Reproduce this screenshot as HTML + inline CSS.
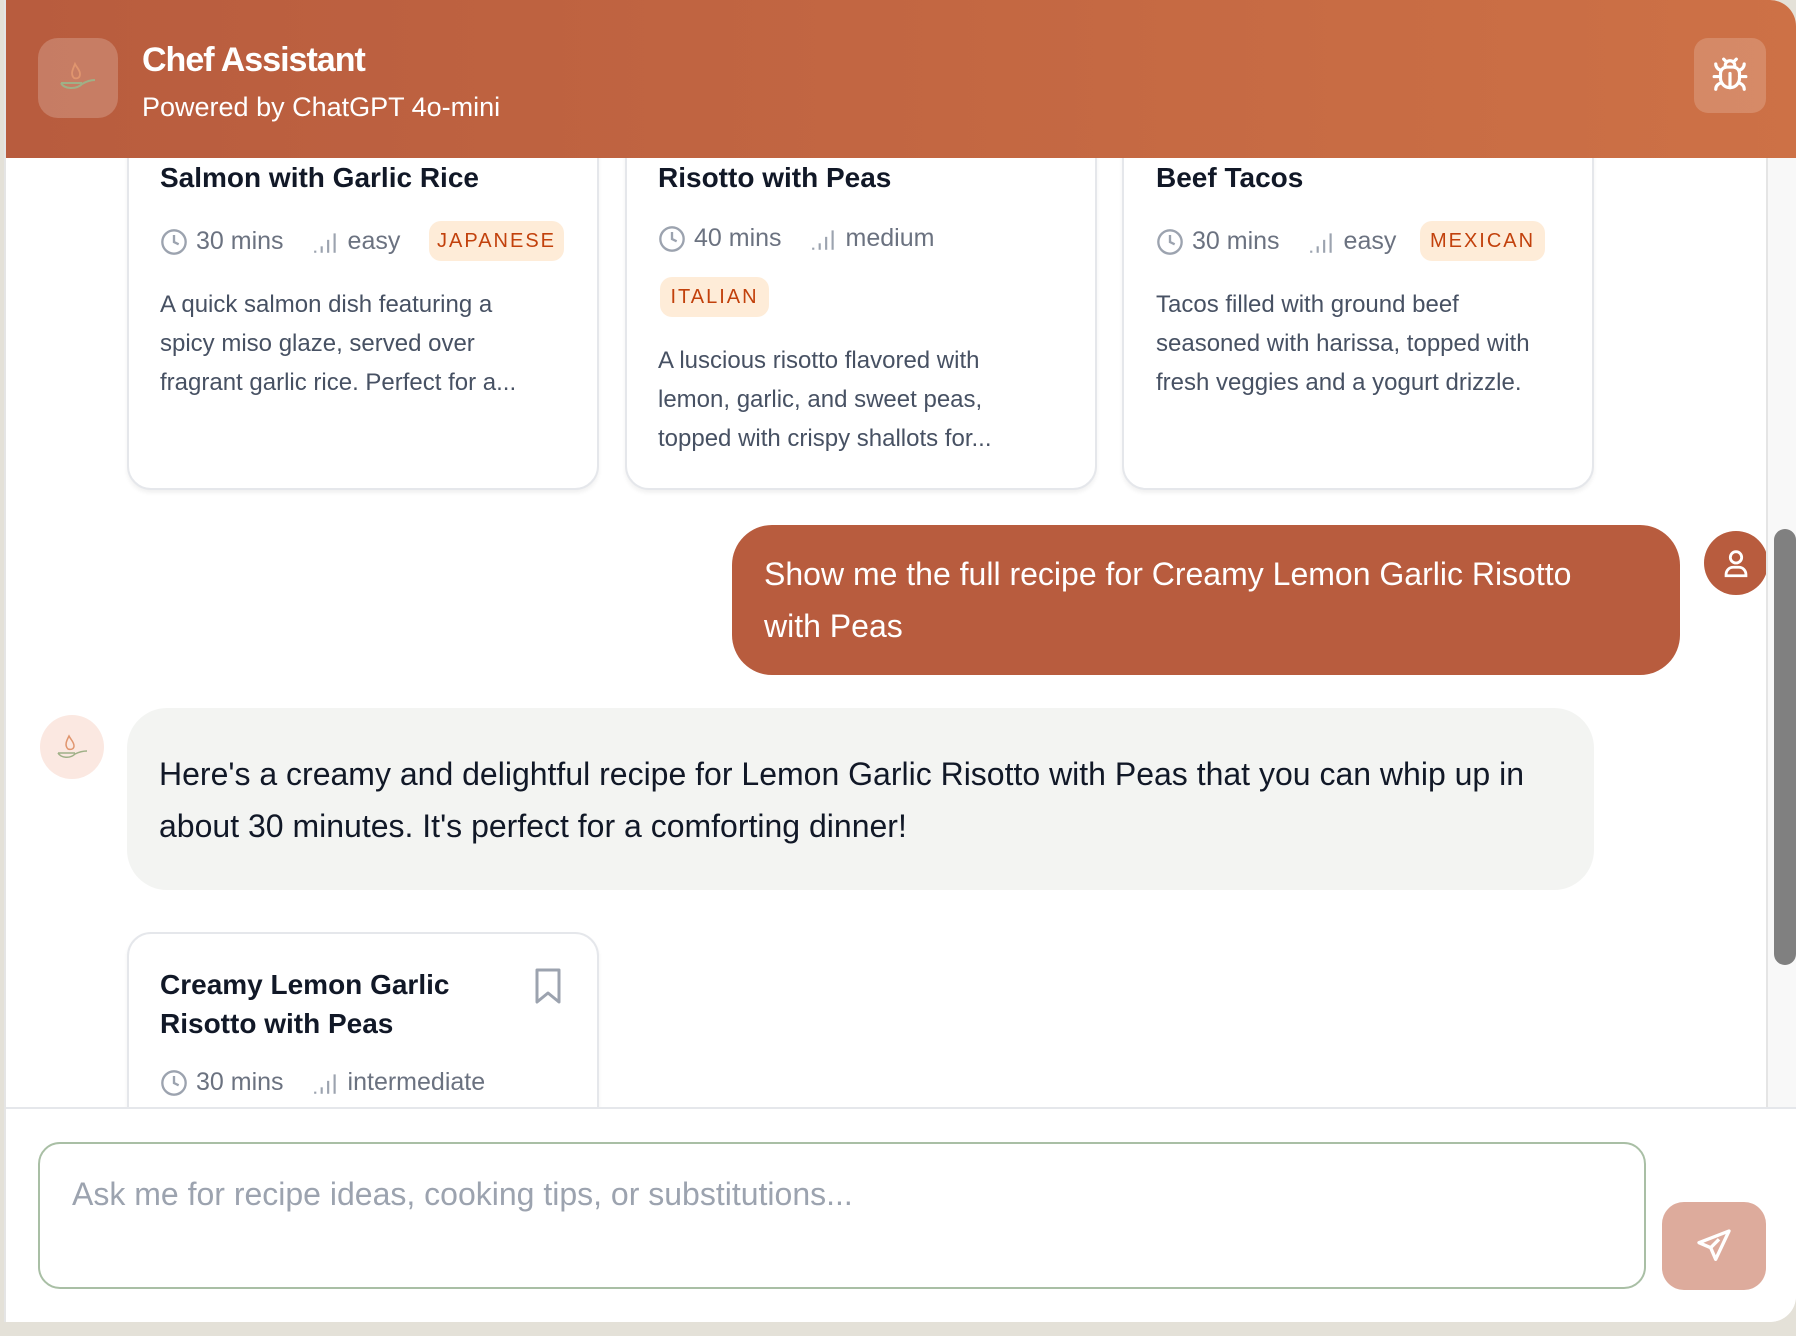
<!DOCTYPE html>
<html><head><meta charset="utf-8"><style>
*{margin:0;padding:0;box-sizing:border-box}
html,body{width:1796px;height:1336px;overflow:hidden;background:#e4e1d8;font-family:"Liberation Sans",sans-serif}
.win{position:absolute;left:4px;top:0;width:1792px;height:1322px;background:#fff;border-bottom-right-radius:26px;border-top-right-radius:26px;overflow:hidden;border-left:2px solid #e5e5e5}
.a{position:absolute}
.hdr{left:0;top:0;width:1792px;height:158px;background:linear-gradient(90deg,#b85c3e,#cd7146);z-index:5}
.card{background:#fff;border:2px solid #e5e7eb;border-radius:24px;box-shadow:0 3px 4px rgba(0,0,0,.06)}
.t{color:#111827;font-weight:bold;font-size:28px;white-space:nowrap}
.meta{color:#6b7280;font-size:25px;white-space:nowrap;display:flex;align-items:center}
.meta svg{margin-right:8px}
.badge{background:#feecd8;color:#c2410c;font-size:20px;letter-spacing:2px;border-radius:12px;display:flex;align-items:center;justify-content:center}
.d{color:#475163;font-size:24px;line-height:39px}
</style></head><body>
<div class="win">
<div class="a hdr">
 <div class="a" style="left:32px;top:38px;width:80px;height:80px;border-radius:20px;background:rgba(255,255,255,.2)">
  <svg width="80" height="80" viewBox="0 0 80 80"><path d="M36 40c-4-4-1-9 1-14 2 4 5 6 5 10 0 4-3 5-6 4z" fill="none" stroke="#e0956e" stroke-width="1.8"/><path d="M23 45c3 6 15 7 21 1 5-3 10-4 13-4M23 45h21" fill="none" stroke="#9fb087" stroke-width="2"/></svg>
 </div>
 <div class="a" style="left:136px;top:41px;color:#fff;font-size:34px;font-weight:bold;letter-spacing:-1px">Chef Assistant</div>
 <div class="a" style="left:136px;top:92px;color:#fff;font-size:27px">Powered by ChatGPT 4o-mini</div>
 <div class="a" style="left:1688px;top:38px;width:72px;height:75px;border-radius:14px;background:rgba(255,255,255,.18)">
  <svg class="a" style="left:17px;top:18px" width="38" height="38" viewBox="0 0 24 24" fill="none" stroke="#fff" stroke-width="2" stroke-linecap="round"><path d="M8 2l1.9 1.9M16 2l-1.9 1.9M9 7.1V6a3 3 0 0 1 6 0v1.1"/><path d="M12 20c-3.3 0-6-2.7-6-6v-3a4 4 0 0 1 4-4h4a4 4 0 0 1 4 4v3c0 3.3-2.7 6-6 6z"/><path d="M12 20v-9M6.5 9C4.6 8.8 3 7.1 3 5M6 13H2M3 21c0-2.1 1.7-3.9 3.8-4M20.97 5c0 2.1-1.6 3.8-3.5 4M22 13h-4M17.2 17c2.1.1 3.8 1.9 3.8 4"/></svg>
 </div>
</div>

<div class="a card" style="left:121px;top:120px;width:472px;height:370px"></div>
<div class="a card" style="left:619px;top:120px;width:472px;height:370px"></div>
<div class="a card" style="left:1116px;top:120px;width:472px;height:370px"></div>

<div class="a t" style="left:154px;top:162px">Salmon with Garlic Rice</div>
<div class="a meta" style="left:154px;top:227px"><svg width="28" height="28" viewBox="0 0 24 24" fill="none" stroke="#9ca3af" stroke-width="2"><circle cx="12" cy="12" r="10"/><path d="M12 6v6l4 2"/></svg>30 mins<span style="width:28px"></span><svg width="28" height="26" viewBox="0 0 26 24" fill="#9ca3af"><rect x="2" y="20" width="2" height="2"/><rect x="8" y="16" width="2" height="6"/><rect x="14" y="10" width="2" height="12"/><rect x="20" y="4" width="2" height="18"/></svg>easy</div>
<div class="a badge" style="left:423px;top:221px;width:135px;height:40px">JAPANESE</div>
<div class="a d" style="left:154px;top:285px;width:420px">A quick salmon dish featuring a<br>spicy miso glaze, served over<br>fragrant garlic rice. Perfect for a...</div>

<div class="a t" style="left:652px;top:162px">Risotto with Peas</div>
<div class="a meta" style="left:652px;top:224px"><svg width="28" height="28" viewBox="0 0 24 24" fill="none" stroke="#9ca3af" stroke-width="2"><circle cx="12" cy="12" r="10"/><path d="M12 6v6l4 2"/></svg>40 mins<span style="width:28px"></span><svg width="28" height="26" viewBox="0 0 26 24" fill="#9ca3af"><rect x="2" y="20" width="2" height="2"/><rect x="8" y="16" width="2" height="6"/><rect x="14" y="10" width="2" height="12"/><rect x="20" y="4" width="2" height="18"/></svg>medium</div>
<div class="a badge" style="left:654px;top:277px;width:109px;height:40px">ITALIAN</div>
<div class="a d" style="left:652px;top:341px;width:420px">A luscious risotto flavored with<br>lemon, garlic, and sweet peas,<br>topped with crispy shallots for...</div>

<div class="a t" style="left:1150px;top:162px">Beef Tacos</div>
<div class="a meta" style="left:1150px;top:227px"><svg width="28" height="28" viewBox="0 0 24 24" fill="none" stroke="#9ca3af" stroke-width="2"><circle cx="12" cy="12" r="10"/><path d="M12 6v6l4 2"/></svg>30 mins<span style="width:28px"></span><svg width="28" height="26" viewBox="0 0 26 24" fill="#9ca3af"><rect x="2" y="20" width="2" height="2"/><rect x="8" y="16" width="2" height="6"/><rect x="14" y="10" width="2" height="12"/><rect x="20" y="4" width="2" height="18"/></svg>easy</div>
<div class="a badge" style="left:1414px;top:221px;width:125px;height:40px">MEXICAN</div>
<div class="a d" style="left:1150px;top:285px;width:420px">Tacos filled with ground beef<br>seasoned with harissa, topped with<br>fresh veggies and a yogurt drizzle.</div>

<div class="a" style="left:726px;top:525px;width:948px;height:150px;background:#b85c3e;border-radius:40px;color:#fff;font-size:32px;line-height:52px;padding:23px 32px">Show me the full recipe for Creamy Lemon Garlic Risotto<br>with Peas</div>
<div class="a" style="left:1698px;top:531px;width:64px;height:64px;border-radius:50%;background:#b85c3e">
 <svg class="a" style="left:15px;top:15px" width="34" height="34" viewBox="0 0 24 24" fill="none" stroke="#fff" stroke-width="2" stroke-linecap="round"><circle cx="12" cy="8" r="4"/><path d="M5 21v-1a5 5 0 0 1 5-5h4a5 5 0 0 1 5 5v1z"/></svg>
</div>

<div class="a" style="left:34px;top:715px;width:64px;height:64px;border-radius:50%;background:#fbe8e1">
 <svg width="64" height="64" viewBox="0 0 64 64"><path d="M28 34c-4-4-1-9 1-13 2 4 5 6 5 10 0 3-3 4-6 3z" fill="none" stroke="#e0956e" stroke-width="1.5"/><path d="M18 38c3 5 12 6 17 1 4-2 9-3 12-3M18 38h17" fill="none" stroke="#9fb087" stroke-width="1.5"/></svg>
</div>
<div class="a" style="left:121px;top:708px;width:1467px;height:182px;background:#f3f4f2;border-radius:40px;color:#111827;font-size:32px;line-height:52px;padding:40px 32px">Here's a creamy and delightful recipe for Lemon Garlic Risotto with Peas that you can whip up in<br>about 30 minutes. It's perfect for a comforting dinner!</div>

<div class="a card" style="left:121px;top:932px;width:472px;height:260px"></div>
<div class="a t" style="left:154px;top:965px;line-height:39px">Creamy Lemon Garlic<br>Risotto with Peas</div>
<svg class="a" style="left:526px;top:967px" width="32" height="38" viewBox="0 0 32 38" fill="none" stroke="#9ca3af" stroke-width="3" stroke-linejoin="round"><path d="M5 3h22v32l-11-9-11 9z"/></svg>
<div class="a meta" style="left:154px;top:1068px"><svg width="28" height="28" viewBox="0 0 24 24" fill="none" stroke="#9ca3af" stroke-width="2"><circle cx="12" cy="12" r="10"/><path d="M12 6v6l4 2"/></svg>30 mins<span style="width:28px"></span><svg width="28" height="26" viewBox="0 0 26 24" fill="#9ca3af"><rect x="2" y="20" width="2" height="2"/><rect x="8" y="16" width="2" height="6"/><rect x="14" y="10" width="2" height="12"/><rect x="20" y="4" width="2" height="18"/></svg>intermediate</div>

<div class="a" style="left:1760px;top:158px;width:32px;height:950px;background:#f8f8f8;border-left:2px solid #e5e5e5"></div>
<div class="a" style="left:1768px;top:529px;width:22px;height:436px;background:#808080;border-radius:11px"></div>

<div class="a" style="left:0;top:1107px;width:1792px;height:215px;background:#fff;border-top:2px solid #e5e7eb"></div>
<div class="a" style="left:32px;top:1142px;width:1608px;height:147px;border:2px solid #a9bfa5;border-radius:22px;color:#9ca3af;font-size:32px;padding:32px 32px">Ask me for recipe ideas, cooking tips, or substitutions...</div>
<div class="a" style="left:1656px;top:1202px;width:104px;height:88px;border-radius:22px;background:#ddab9c">
 <svg class="a" style="left:32px;top:24px" width="40" height="40" viewBox="0 0 24 24" fill="none" stroke="#fff" stroke-width="2" stroke-linejoin="round"><path d="M21 3L3 10l7 3 3 7z"/><path d="M10 13l5-5"/></svg>
</div>
</div>
</body></html>
